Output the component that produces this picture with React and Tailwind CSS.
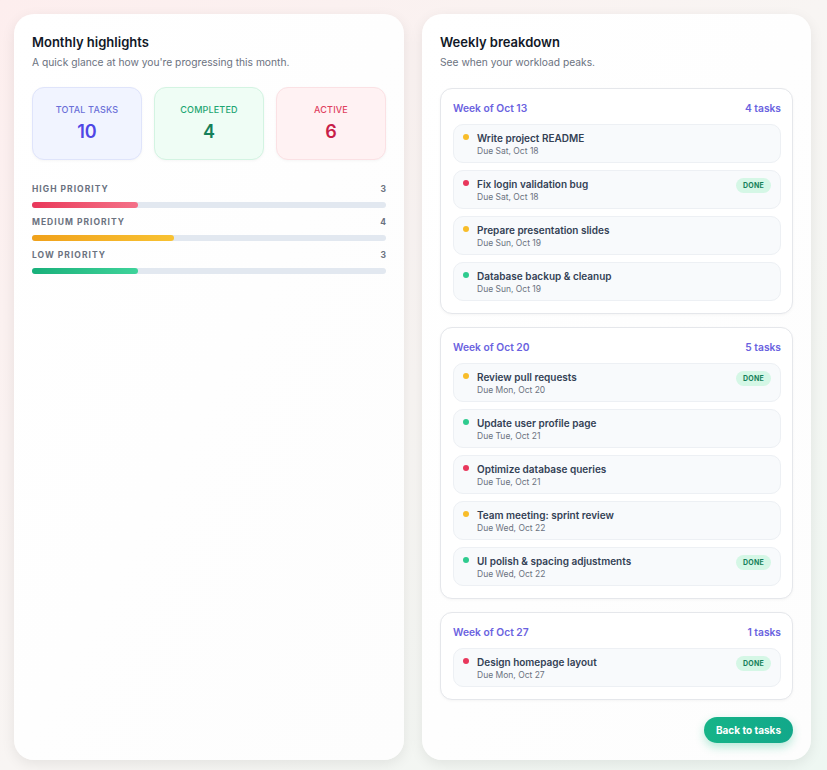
import React from 'react';

const stats = [
    { label: 'Total tasks', value: 10, box: 'bg-[#f1f4ff] border-[#dfe4fb]', labelCls: 'text-[#6b6fd8]', valueCls: 'text-[#4f46e5]' },
    { label: 'Completed', value: 4, box: 'bg-[#effdf5] border-[#d3f4e2]', labelCls: 'text-[#1ea672]', valueCls: 'text-[#15805a]' },
    { label: 'Active', value: 6, box: 'bg-[#fff2f3] border-[#fbe1e4]', labelCls: 'text-[#e0405e]', valueCls: 'text-[#c81e48]' },
];

const priorities = [
    { label: 'High priority', count: 3, pct: 30, bar: 'bg-gradient-to-r from-[#e9365a] to-[#f47088]' },
    { label: 'Medium priority', count: 4, pct: 40, bar: 'bg-gradient-to-r from-[#f0a11a] to-[#f8c232]' },
    { label: 'Low priority', count: 3, pct: 30, bar: 'bg-gradient-to-r from-[#17b07a] to-[#3ed39a]' },
];

const dotColor = {
    high: 'bg-[#e8375c]',
    medium: 'bg-[#f8bd2a]',
    low: 'bg-[#2fcb8f]',
};

const weeks = [
    {
        title: 'Week of Oct 13',
        tasks: [
            { name: 'Write project README', due: 'Due Sat, Oct 18', p: 'medium' },
            { name: 'Fix login validation bug', due: 'Due Sat, Oct 18', p: 'high', done: true },
            { name: 'Prepare presentation slides', due: 'Due Sun, Oct 19', p: 'medium' },
            { name: 'Database backup & cleanup', due: 'Due Sun, Oct 19', p: 'low' },
        ],
    },
    {
        title: 'Week of Oct 20',
        tasks: [
            { name: 'Review pull requests', due: 'Due Mon, Oct 20', p: 'medium', done: true },
            { name: 'Update user profile page', due: 'Due Tue, Oct 21', p: 'low' },
            { name: 'Optimize database queries', due: 'Due Tue, Oct 21', p: 'high' },
            { name: 'Team meeting: sprint review', due: 'Due Wed, Oct 22', p: 'medium' },
            { name: 'UI polish & spacing adjustments', due: 'Due Wed, Oct 22', p: 'low', done: true },
        ],
    },
    {
        title: 'Week of Oct 27',
        tasks: [
            { name: 'Design homepage layout', due: 'Due Mon, Oct 27', p: 'high', done: true },
        ],
    },
];

function TaskRow({ task }) {
    return (
        <div className="flex items-start gap-2 rounded-[10px] border border-[#edf0f4] bg-[#f8fafc] pl-[9px] pr-[9px] pt-[7px] pb-[5px]">
            <span className={`mt-[2px] h-[6px] w-[6px] shrink-0 rounded-full ${dotColor[task.p]}`} />
            <div className="flex-1 min-w-0">
                <div className="text-[10px] leading-[13px] font-semibold text-[#334155]">{task.name}</div>
                <div className="text-[8.5px] leading-[11px] mt-[1px] text-[#6b7280]">{task.due}</div>
            </div>
            {task.done && (
                <span className="rounded-full bg-[#d5f7e6] px-[7px] py-[3px] text-[7px] leading-[9px] font-bold tracking-[0.03em] text-[#15805a]">
                    DONE
                </span>
            )}
        </div>
    );
}

export default function App() {
    return (
        <div
            className="min-h-[770px] w-full bg-gradient-to-br from-[#fdeeee] via-[#f8f5f3] to-[#eef7f2] p-[14px] flex gap-[18px]"
            style={{ fontFamily: 'Inter, "Noto Sans", sans-serif' }}
        >
            {/* left: monthly highlights */}
            <div className="w-[390px] shrink-0 rounded-[20px] bg-gradient-to-br from-white to-[#fdfdfd] shadow-[0_4px_14px_rgba(0,0,0,0.08)] px-[18px] pt-[19px]">
                <h2 className="text-[13px] leading-[18px] font-semibold text-[#111827]">Monthly highlights</h2>
                <p className="mt-[3px] text-[10.25px] leading-[16px] text-[#6b7280]">A quick glance at how you're progressing this month.</p>

                <div className="mt-[17px] grid grid-cols-3 gap-[12px]">
                    {stats.map((s) => (
                        <div key={s.label} className={`h-[73px] rounded-[12px] border ${s.box} flex flex-col items-center justify-center shadow-[0_1px_3px_rgba(0,0,0,0.04)]`}>
                            <div className={`text-[9px] leading-[12px] uppercase tracking-[0.02em] font-medium ${s.labelCls}`}>{s.label}</div>
                            <div className={`mt-[5px] text-[18px] leading-[22px] font-semibold ${s.valueCls}`}>{s.value}</div>
                        </div>
                    ))}
                </div>

                <div className="mt-[24px] flex flex-col gap-[9px]">
                    {priorities.map((p) => (
                        <div key={p.label}>
                            <div className="flex justify-between text-[8.5px] leading-[11px] font-bold uppercase tracking-[0.12em] text-[#6b7280]">
                                <span>{p.label}</span>
                                <span className="tracking-normal">{p.count}</span>
                            </div>
                            <div className="mt-[7px] h-[6px] w-full rounded-full bg-[#e2e8f0]">
                                <div className={`h-full rounded-full ${p.bar}`} style={{ width: `${p.pct}%` }} />
                            </div>
                        </div>
                    ))}
                </div>
            </div>

            {/* right: weekly breakdown */}
            <div className="w-[389px] shrink-0 rounded-[20px] bg-gradient-to-br from-white to-[#fdfdfd] shadow-[0_4px_14px_rgba(0,0,0,0.08)] px-[18px] pt-[19px] pb-[17px] flex flex-col">
                <h2 className="text-[13px] leading-[18px] font-semibold text-[#111827]">Weekly breakdown</h2>
                <p className="mt-[3px] text-[10.25px] leading-[16px] text-[#6b7280]">See when your workload peaks.</p>

                <div className="mt-[18px] flex flex-col gap-[13px]">
                    {weeks.map((w) => (
                        <div key={w.title} className="rounded-[12px] border border-[#e5e7eb] bg-white pl-[12px] pr-[11px] pt-[12px] pb-[12px] shadow-[0_1px_3px_rgba(0,0,0,0.04)]">
                            <div className="flex justify-between text-[10.25px] leading-[14px] font-semibold text-[#6a62e0]">
                                <span>{w.title}</span>
                                <span>{w.tasks.length} tasks</span>
                            </div>
                            <div className="mt-[9px] flex flex-col gap-[7px]">
                                {w.tasks.map((t) => (
                                    <TaskRow key={t.name} task={t} />
                                ))}
                            </div>
                        </div>
                    ))}
                </div>

                <div className="mt-[17px] flex justify-end">
                    <button className="h-[26px] rounded-full bg-gradient-to-r from-[#16b488] to-[#12a88a] px-[12px] text-[10px] font-bold text-white shadow-[0_4px_10px_rgba(16,185,129,0.3)]">
                        Back to tasks
                    </button>
                </div>
            </div>
        </div>
    );
}
